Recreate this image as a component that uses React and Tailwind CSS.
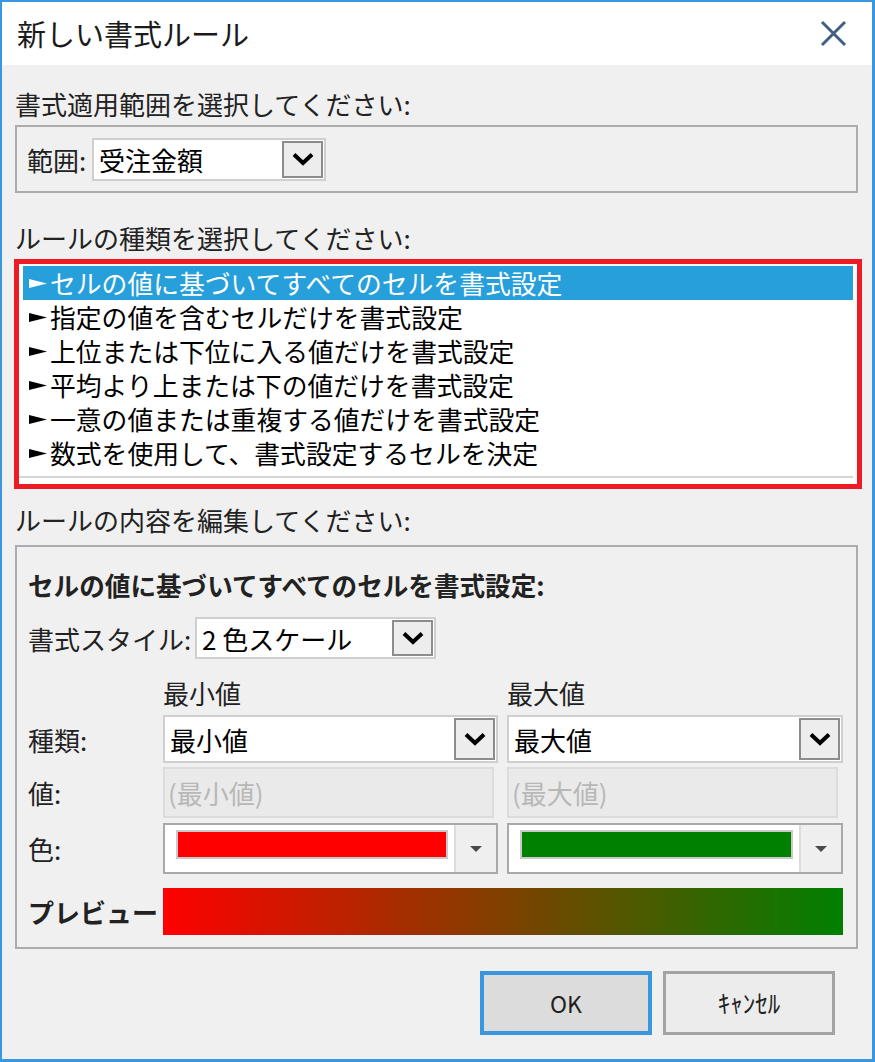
import React from "react";

const font = { fontFamily: '"Noto Sans CJK JP", "Noto Sans", sans-serif' };

const rules = [
  "セルの値に基づいてすべてのセルを書式設定",
  "指定の値を含むセルだけを書式設定",
  "上位または下位に入る値だけを書式設定",
  "平均より上または下の値だけを書式設定",
  "一意の値または重複する値だけを書式設定",
  "数式を使用して、書式設定するセルを決定",
];

const Chevron = () => (
  <svg width="22" height="14" viewBox="0 0 22 14">
    <polyline points="2,2.5 11,11 20,2.5" fill="none" stroke="#000" strokeWidth="4" />
  </svg>
);

const DropButton = ({ w }) => (
  <div className={`${w} self-stretch flex items-center justify-center bg-[#ededed] border-2 border-[#8c8c8c]`}>
    <Chevron />
  </div>
);

const Select = ({ className, text }) => (
  <div className={`flex items-stretch bg-white border-2 border-[#cfcfcf] p-[1px] ${className}`}>
    <div className="flex-1 flex items-center pl-[4px] text-[26px] text-black">{text}</div>
    <DropButton w="w-[41px]" />
  </div>
);

const Disabled = ({ text }) => (
  <div className="w-[331px] h-[51px] flex items-center pl-[3px] bg-[#eaeaea] border-2 border-[#dcdcdc] text-[26px] text-[#b8b8b8]">
    {text}
  </div>
);

const ColorPick = ({ w, color }) => (
  <div className={`${w} h-[51px] flex border-2 border-[#a9a9a9] bg-white`}>
    <div className="flex-1 pl-[11px] pt-[5px] pr-[6px]">
      <div className="h-[29px] border-2 border-[#cacaca]" style={{ background: color }} />
    </div>
    <div className="w-[42px] border-l-2 border-[#dcdcdc] bg-[#efefef] flex items-center justify-center">
      <svg width="12" height="6" viewBox="0 0 12 6">
        <polygon points="0,0 12,0 6,6" fill="#4a4a4a" />
      </svg>
    </div>
  </div>
);

const Arrow = ({ color }) => (
  <svg width="18" height="9" viewBox="0 0 18 9" className="shrink-0">
    <polygon points="0,0 18,4.5 0,9" fill={color} />
  </svg>
);

export default function App() {
  return (
    <div
      style={font}
      className="w-[875px] h-[1062px] bg-[#f0f0f0] border-l-2 border-t-2 border-r-[3px] border-b-[3px] border-[#3a96dd] flex flex-col text-[#222]"
    >
      {/* title bar */}
      <div className="h-[63px] bg-white flex items-center justify-between pl-[15px] pr-[25px]">
        <span className="text-[29px] text-[#1a1a1a]">新しい書式ルール</span>
        <svg width="27" height="27" viewBox="0 0 27 27">
          <path d="M2 2 L25 25 M25 2 L2 25" stroke="#3f5f86" strokeWidth="3" />
        </svg>
      </div>

      <div className="px-[13px] flex flex-col">
        <div className="mt-[21px] h-[34px] flex items-center text-[26px]">書式適用範囲を選択してください:</div>

        <div className="mt-[5px] w-[843px] h-[68px] border-2 border-[#acacb0] flex items-center pl-[10px]">
          <span className="text-[26px] w-[65px]">範囲:</span>
          <Select className="w-[234px] h-[43px]" text="受注金額" />
        </div>

        <div className="mt-[27px] h-[34px] flex items-center text-[26px]">ルールの種類を選択してください:</div>

        <div className="mt-[5px] w-[848px] -ml-[1px] border-[5px] border-[#ed1c24] bg-white flex flex-col pt-[2px]">
          {rules.map((r, i) => (
            <div
              key={r}
              className={`mx-[4px] h-[34px] flex items-center pl-[6px] gap-[3px] text-[25.8px] ${
                i === 0 ? "bg-[#279fdb] text-white" : "text-black"
              }`}
            >
              <Arrow color={i === 0 ? "#fff" : "#000"} />
              <span>{r}</span>
            </div>
          ))}
          <div className="mt-[6px] mr-[4px] h-[2px] bg-[#d4d4d4]" />
          <div className="h-[6px]" />
        </div>

        <div className="mt-[13px] h-[34px] flex items-center text-[26px]">ルールの内容を編集してください:</div>

        <div className="mt-[9px] w-[843px] h-[404px] border-2 border-[#acacb0] pl-[11px] pt-[21px] flex flex-col">
          <div className="h-[34px] flex items-center text-[25.6px] font-bold">
            セルの値に基づいてすべてのセルを書式設定:
          </div>

          <div className="mt-[15px] h-[42px] flex items-center">
            <span className="w-[167px] text-[26px]">書式スタイル:</span>
            <Select className="w-[241px] h-[42px]" text="2 色スケール" />
          </div>

          <div className="mt-[16px] h-[34px] flex items-center text-[26px]">
            <span className="w-[135px]" />
            <span className="w-[344px]">最小値</span>
            <span>最大値</span>
          </div>

          <div className="mt-[6px] h-[48px] flex items-center">
            <span className="w-[135px] text-[26px]">種類:</span>
            <Select className="w-[335px] h-[48px]" text="最小値" />
            <Select className="ml-[9px] w-[336px] h-[48px]" text="最大値" />
          </div>

          <div className="mt-[4px] h-[51px] flex items-center">
            <span className="w-[135px] text-[26px]">値:</span>
            <Disabled text="(最小値)" />
            <div className="ml-[13px]">
              <Disabled text="(最大値)" />
            </div>
          </div>

          <div className="mt-[5px] h-[51px] flex items-center">
            <span className="w-[135px] text-[26px]">色:</span>
            <ColorPick w="w-[335px]" color="#ff0000" />
            <div className="ml-[9px]">
              <ColorPick w="w-[336px]" color="#008000" />
            </div>
          </div>

          <div className="mt-[14px] h-[47px] flex items-center">
            <span className="w-[135px] text-[26px] font-bold">プレビュー</span>
            <div className="w-[680px] h-[47px] bg-[linear-gradient(to_right,#ff0000,#008000)]" />
          </div>
        </div>

        <div className="mt-[22px] mr-[24px] flex justify-end gap-[11px]">
          <div className="w-[172px] h-[64px] border-4 border-[#3a96dd] bg-[#dcdcdc] flex items-center justify-center text-[23px] text-[#222]">
            OK
          </div>
          <div className="w-[172px] h-[64px] border-[3px] border-[#a3a3a3] bg-[#ececec] flex items-center justify-center text-[25px] text-[#222]">
            ｷｬﾝｾﾙ
          </div>
        </div>
      </div>
    </div>
  );
}
